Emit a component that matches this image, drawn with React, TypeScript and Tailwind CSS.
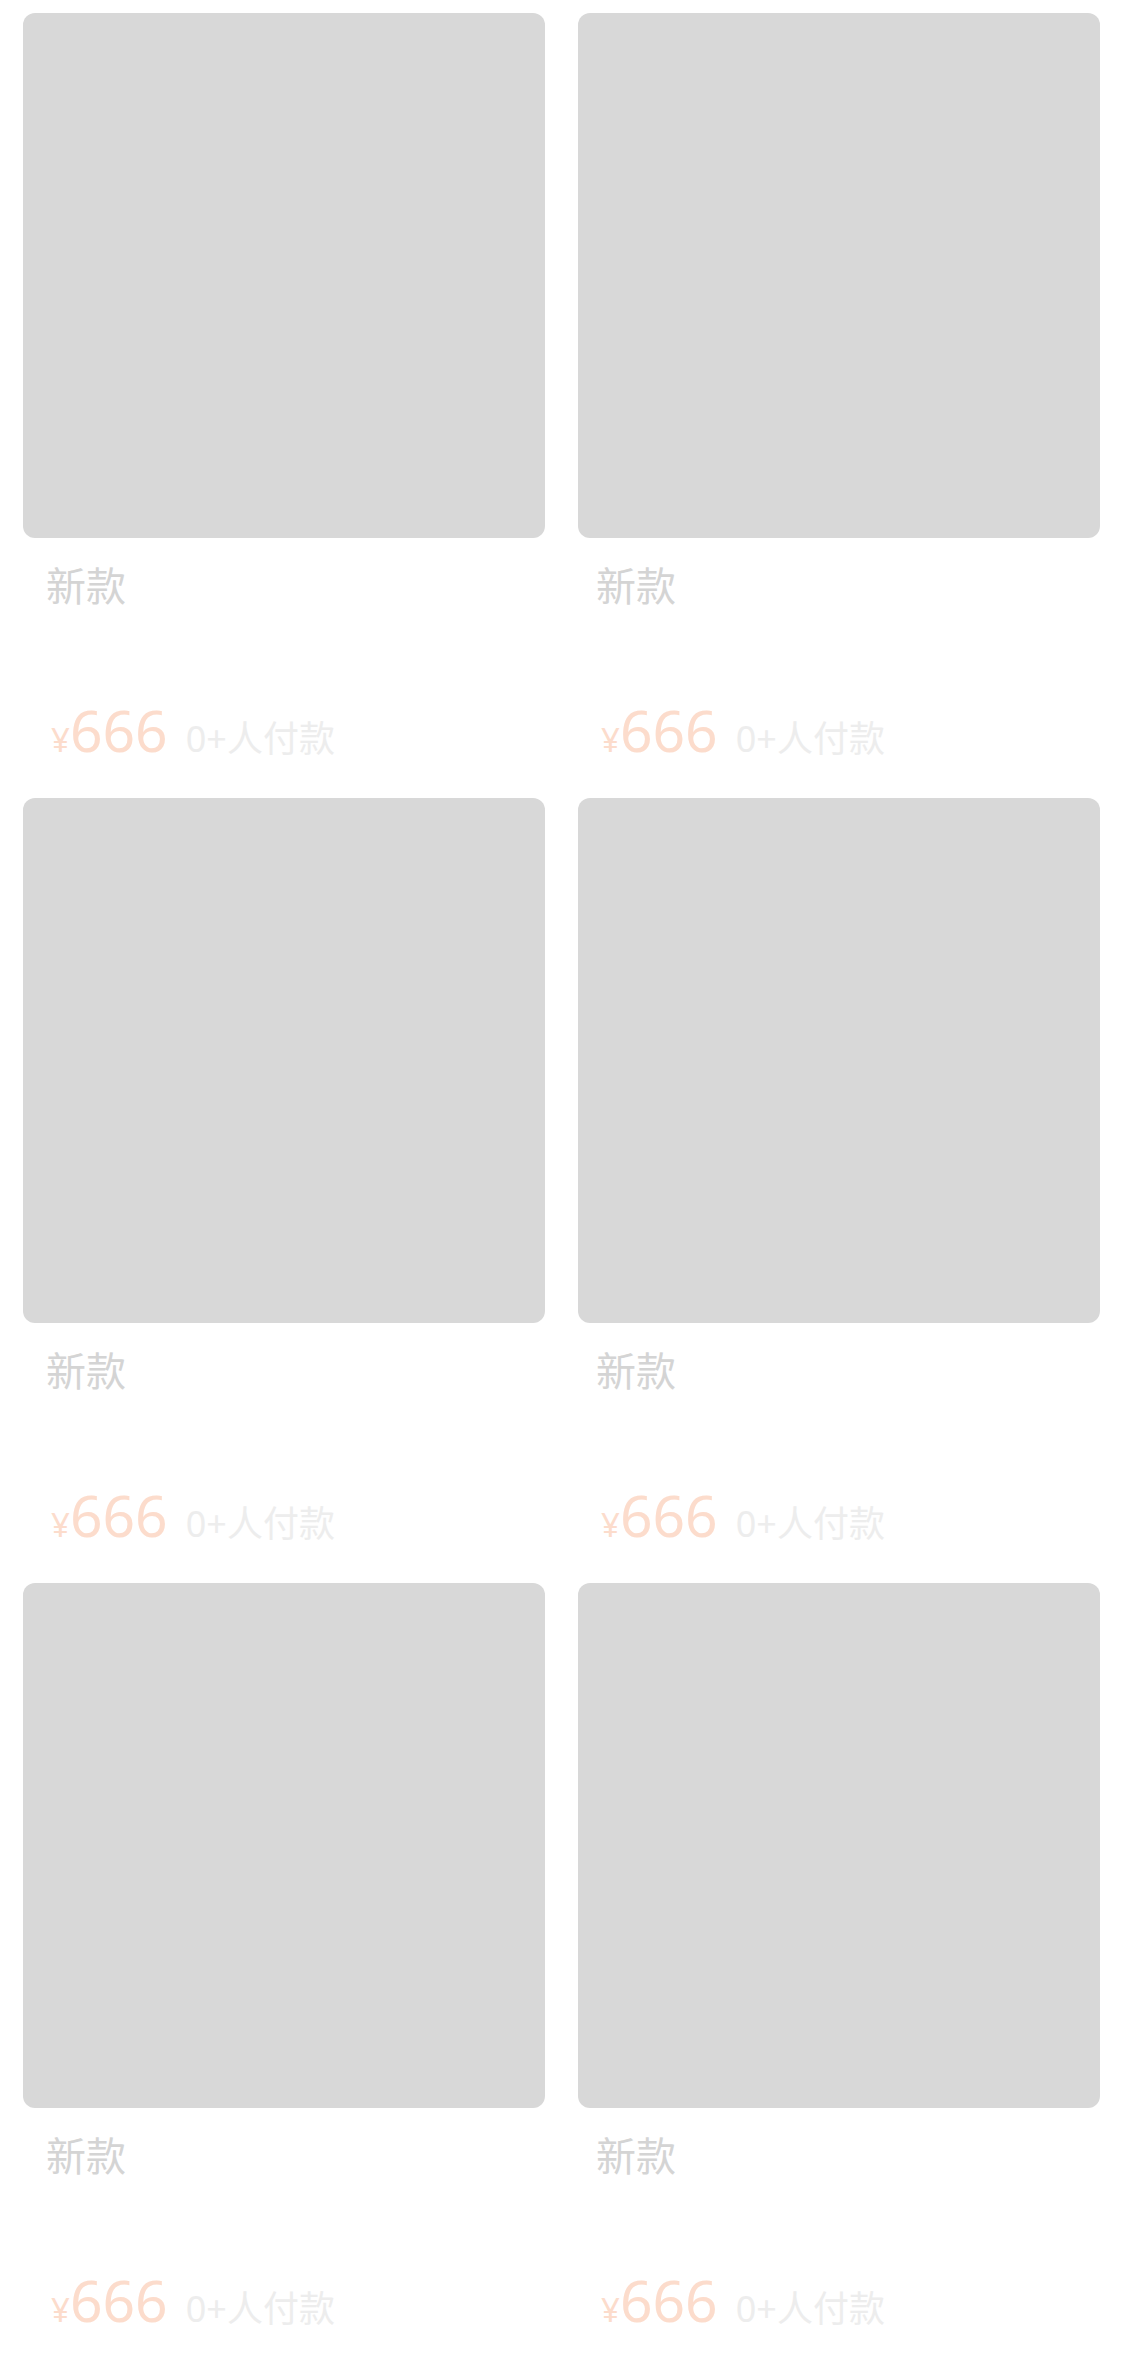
import React from "react";

function Card({ right }: { right: boolean }) {
  return (
    <div className="flex flex-col">
      <div className="h-[525px] rounded-[12px] bg-[#d8d8d8]" />
      <div className={right ? "h-[260px] flex flex-col -ml-[5px]" : "h-[260px] flex flex-col"}>
        <div className="mt-[24px] pl-[23px] text-[40px] leading-[48px] text-[#d4d4d4]">新款</div>
        <div className="mt-[88px] pl-[28px] flex items-baseline">
          <span className="text-[33px] text-[#fcdccc]">¥</span>
          <span className="text-[57px] leading-[64px] text-[#fcdccc]">666</span>
          <span className="ml-[18px] text-[36px] text-[#ededed]">0+人付款</span>
        </div>
      </div>
    </div>
  );
}

export default function App() {
  return (
    <div
      className="w-[1125px] h-[2363px] overflow-hidden bg-white pt-[13px] pl-[23px] pr-[25px]"
      style={{ fontFamily: '"Noto Sans", "Noto Sans CJK SC", sans-serif' }}
    >
      <div className="grid grid-cols-2 gap-x-[33px]">
        {Array.from({ length: 6 }).map((_, i) => (
          <Card key={i} right={i % 2 === 1} />
        ))}
      </div>
    </div>
  );
}
